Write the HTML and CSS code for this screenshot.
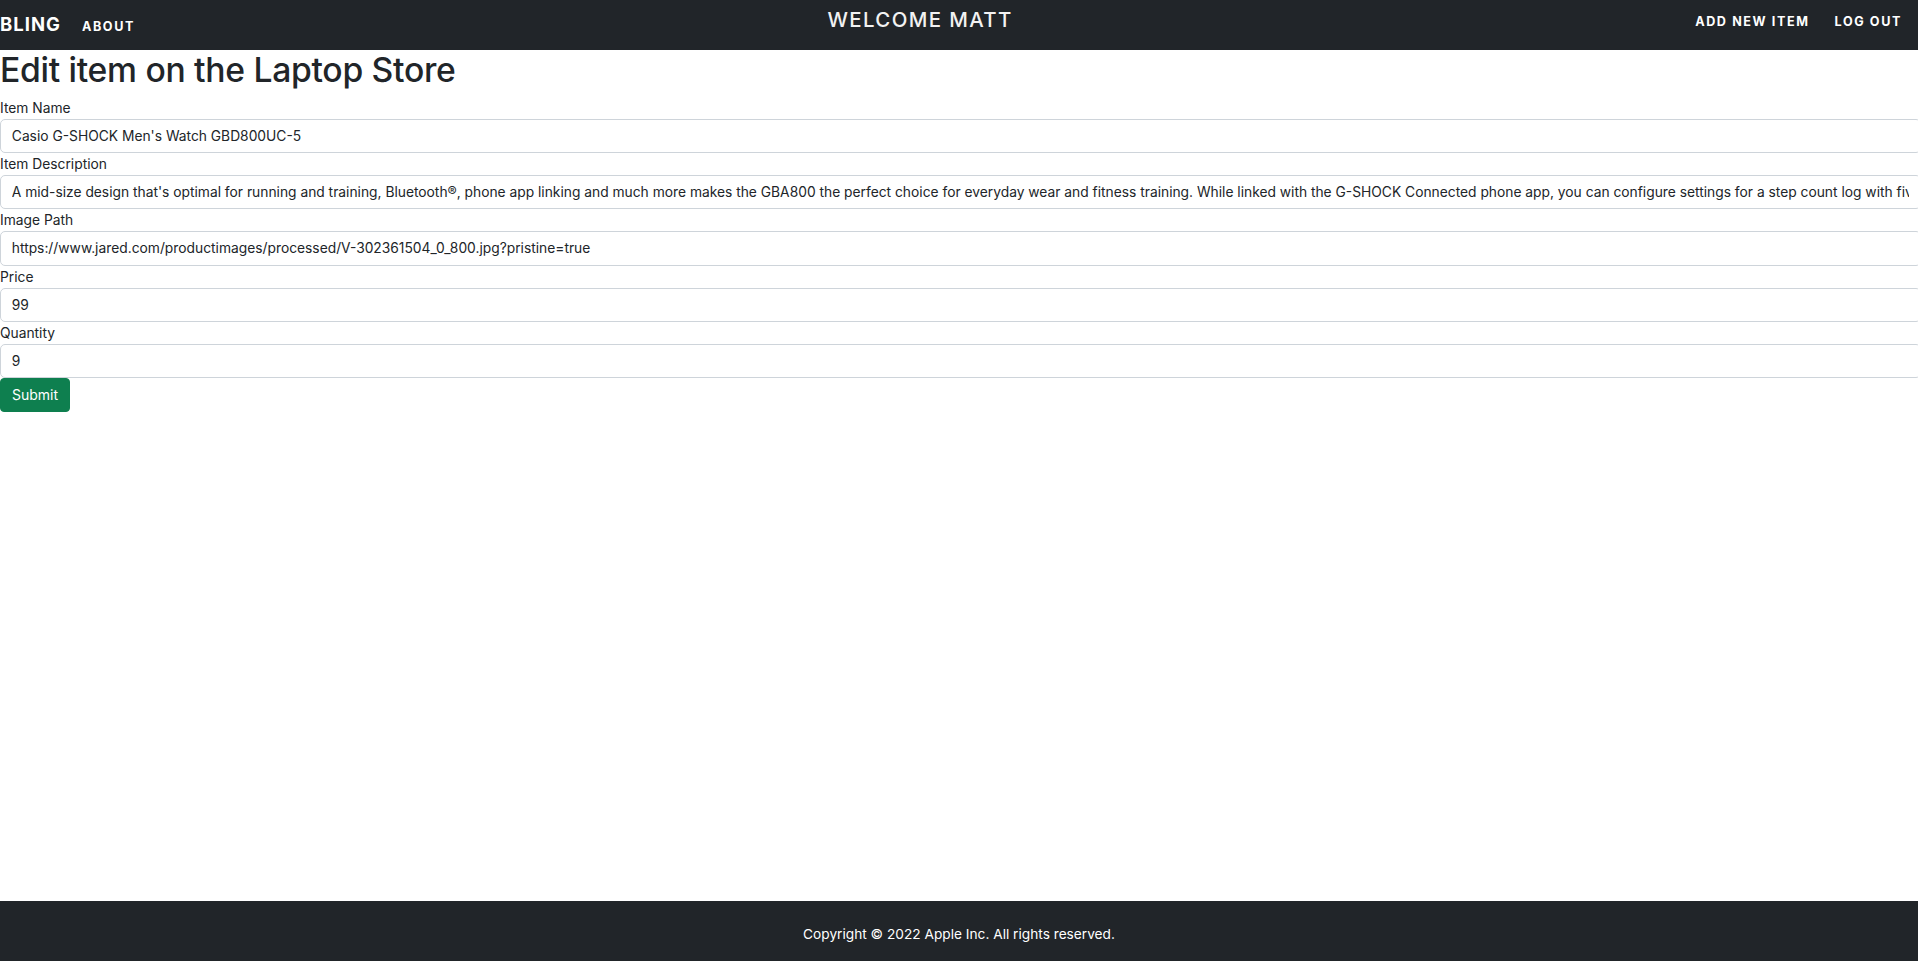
FILE: index.html
```html
<!DOCTYPE html>
<html lang="en">
<head>
<meta charset="utf-8">
<title>Edit item</title>
<link rel="stylesheet" href="styles.css">
</head>
<body>
<div class="page">
  <header class="navbar">
    <nav class="nav-left">
      <a class="brand" href="#">BLING</a>
      <a class="nav-link" href="#">ABOUT</a>
    </nav>
    <div class="welcome">WELCOME MATT</div>
    <nav class="nav-right">
      <a class="nav-link" href="#">ADD NEW ITEM</a>
      <a class="nav-link" href="#">LOG OUT</a>
    </nav>
  </header>

  <main class="content">
    <h1 class="title">Edit item on the Laptop Store</h1>
    <form class="form">
      <label class="label" for="name">Item Name</label>
      <input class="field" id="name" type="text" value="Casio G-SHOCK Men's Watch GBD800UC-5">
      <label class="label" for="desc">Item Description</label>
      <input class="field" id="desc" type="text" value="A mid-size design that's optimal for running and training, Bluetooth®, phone app linking and much more makes the GBA800 the perfect choice for everyday wear and fitness training. While linked with the G-SHOCK Connected phone app, you can configure settings for a step count log with five target levels.">
      <label class="label" for="img">Image Path</label>
      <input class="field" id="img" type="text" value="https://www.jared.com/productimages/processed/V-302361504_0_800.jpg?pristine=true">
      <label class="label" for="price">Price</label>
      <input class="field" id="price" type="text" value="99">
      <label class="label" for="qty">Quantity</label>
      <input class="field" id="qty" type="text" value="9">
      <div><button class="btn-submit" type="button">Submit</button></div>
    </form>
  </main>

  <footer class="footer">
    <p class="copy">Copyright © 2022 Apple Inc. All rights reserved.</p>
  </footer>
</div>
</body>
</html>
```

FILE: styles.css
```css
html, body {
  margin: 0;
  padding: 0;
  overflow: hidden;
}
body {
  font-family: Inter, "Helvetica Neue", Arial, sans-serif;
  color: #212529;
  background: #fff;
  font-size: 13.8px;
}
.page {
  display: flex;
  flex-direction: column;
  min-height: 961px;
}
.navbar {
  height: 50px;
  background: #212529;
  display: flex;
  align-items: flex-start;
  color: #fff;
  box-sizing: border-box;
}
.nav-left, .nav-right {
  display: flex;
  align-items: baseline;
  height: 50px;
  padding-top: 12px;
  box-sizing: border-box;
}
.nav-left { gap: 21px; }
.nav-right { gap: 25px; padding-right: 16px; }
.brand {
  color: #fff;
  text-decoration: none;
  font-weight: 700;
  font-size: 18.5px;
  letter-spacing: 1px;
  line-height: 24px;
}
.nav-link {
  color: #fff;
  text-decoration: none;
  font-weight: 700;
  font-size: 12.6px;
  letter-spacing: 1.6px;
  line-height: 20px;
}
.welcome {
  flex: 1;
  text-align: center;
  font-size: 20.4px;
  font-weight: 500;
  letter-spacing: 1.4px;
  padding-top: 7px;
  padding-left: 10px;
  line-height: 26px;
  color: #f2f2f2;
}
.content {
  flex: 1;
}
.title {
  margin: 0 0 7px;
  font-size: 33.7px;
  font-weight: 500;
  line-height: 40px;
  letter-spacing: -0.3px;
}
.form {
  display: flex;
  flex-direction: column;
}
.label {
  display: block;
  font-size: 13.8px;
  line-height: 22px;
}
.field {
  display: block;
  width: calc(100% + 3px);
  box-sizing: border-box;
  height: 34.2px;
  padding: 5.4px 10.8px;
  font-family: inherit;
  font-size: 13.8px;
  line-height: 21.6px;
  color: #212529;
  background: #fff;
  border: 1px solid #ced4da;
  border-radius: 5px;
  margin: 0;
  outline: none;
}
.btn-submit {
  height: 34.2px;
  padding: 0 11px;
  font-family: inherit;
  font-size: 14px;
  line-height: 21.6px;
  color: #fff;
  background: #0e7f4f;
  border: 1px solid #0e7f4f;
  border-radius: 4px;
  cursor: pointer;
}
.footer {
  height: 60px;
  background: #212529;
  display: flex;
  align-items: center;
  justify-content: center;
  padding-top: 8px;
  box-sizing: border-box;
}
.copy {
  margin: 0;
  color: #fff;
  font-size: 13.7px;
  line-height: 21.6px;
}
```
